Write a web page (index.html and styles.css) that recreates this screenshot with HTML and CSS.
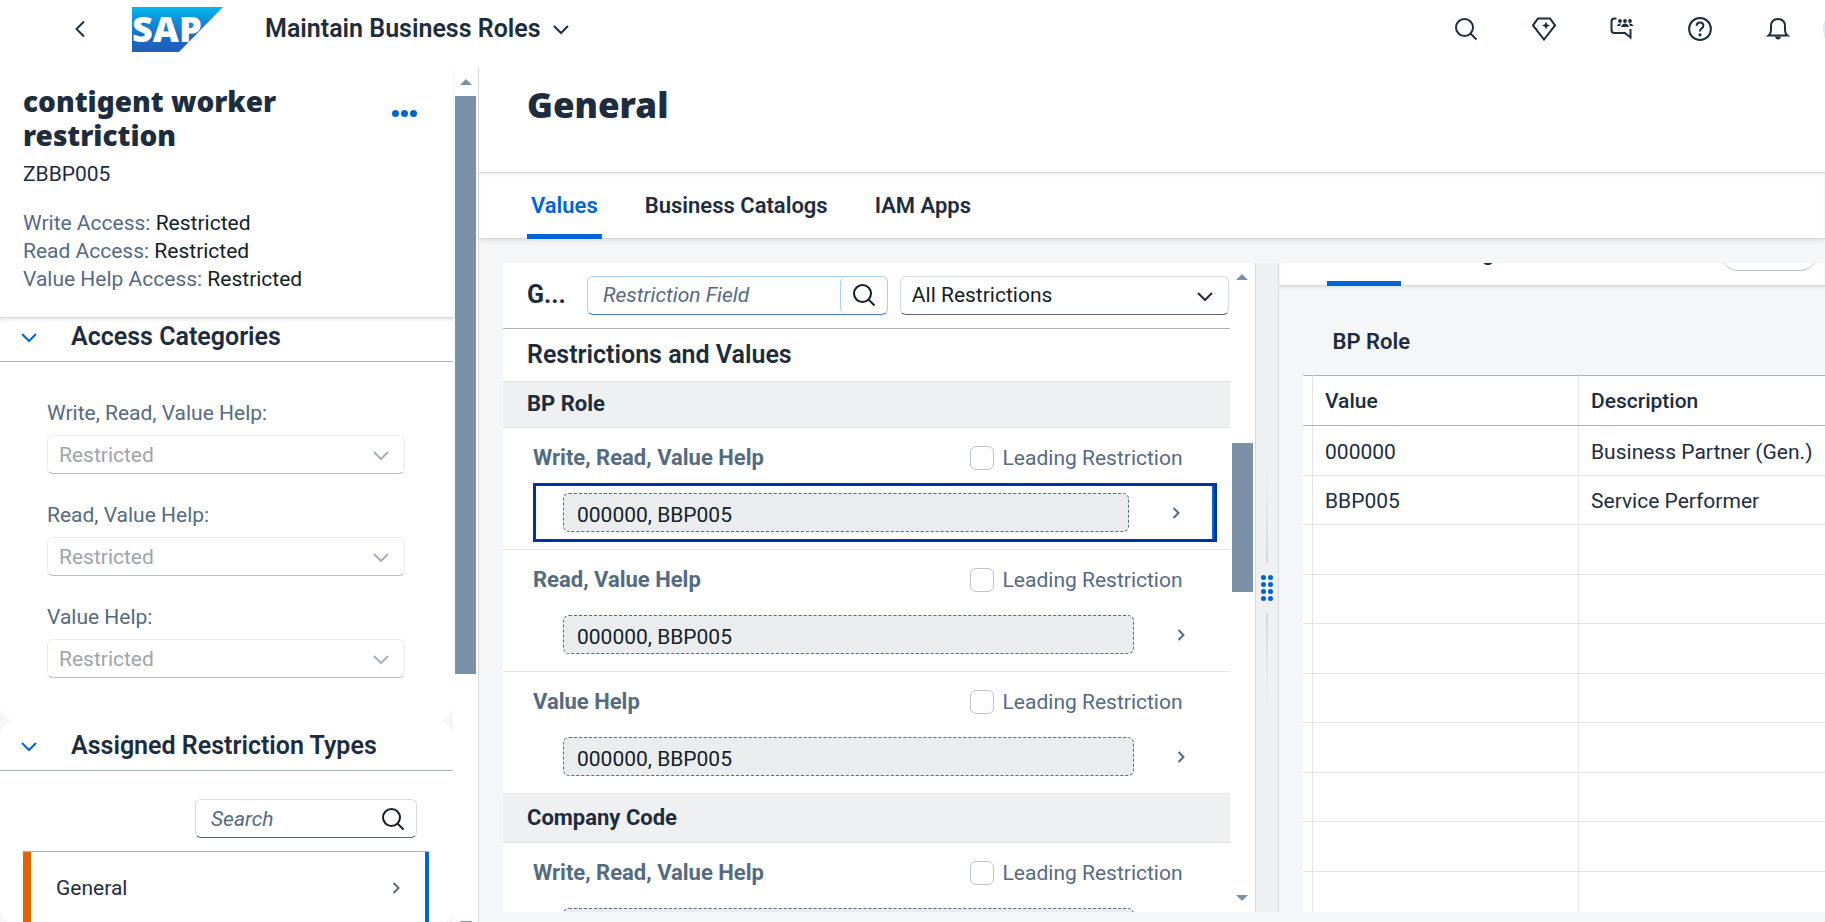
FILE: index.html
```html
<!DOCTYPE html>
<html lang="en">
<head>
    <meta charset="UTF-8">
    <meta name="viewport" content="width=device-width, initial-scale=1.0">
    <title>Maintain Business Roles</title>
    <link rel="stylesheet" href="styles.css">
</head>
<body>
    <!-- Shared icons -->
    <svg class="icon-defs" width="0" height="0" aria-hidden="true">
        <symbol id="search" viewBox="0 0 24 24"><circle cx="10.5" cy="10.5" r="8.5"/><path d="M16.6 16.6 22.5 22.5"/></symbol>
        <symbol id="down" viewBox="0 0 24 24"><path d="M5 9l7 7 7-7"/></symbol>
        <symbol id="right" viewBox="0 0 24 24"><path d="M9.500 7l5 5-5 5"/></symbol>
    </svg>

    <header class="shell">
        <button class="back" aria-label="Back">
            <svg class="icon" viewBox="0 0 24 24"><path d="M16 4.500l-7.500 7.500 7.500 7.500"/></svg>
        </button>
        <a class="logo" href="#" aria-label="SAP home">
            <svg width="91" height="45" viewBox="0 0 91 45">
                <defs>
                    <linearGradient id="sapBlue" x1="0" y1="0" x2="0" y2="1">
                        <stop offset="0" stop-color="#00b8f1"/>
                        <stop offset="0.3" stop-color="#0d90d9"/>
                        <stop offset="0.65" stop-color="#1a6cc6"/>
                        <stop offset="1" stop-color="#1e5fbb"/>
                    </linearGradient>
                </defs>
                <path d="M0 0h91L47 45H0z" fill="url(#sapBlue)"/>
                <text class="logo-text" x="0" y="35">SAP</text>
            </svg>
        </a>
        <button class="app-title">Maintain Business Roles
            <svg class="icon"><use href="#down"/></svg>
        </button>
        <div class="shell-actions">
            <button aria-label="Search"><svg class="icon"><use href="#search"/></svg></button>
            <button aria-label="What's new">
                <svg class="icon" viewBox="0 0 24 24"><path d="M6 1.500h12l5 6.800L12 22.500 1 8.300z"/><path class="solid" d="M14 4.500l1.200 2.800 2.800 1.200-2.800 1.200L14 12.500l-1.200-2.800L10 8.500l2.800-1.200z"/></svg>
            </button>
            <button aria-label="Community">
                <svg class="icon" viewBox="0 0 24 24"><path d="M6.500 1.500H4.500Q1.500 1.500 1.500 4.500v8.500q0 3 3 3H15l5.500 4.500V12"/><g class="solid"><circle cx="10" cy="4" r="1.900"/><circle cx="15" cy="4" r="1.900"/><circle cx="20" cy="4" r="1.900"/><path d="M7 9q.5-3 4-2.500l-1 2.500zM11 10q1-3.500 4-3.500t4 3.500zM19 6.500q3.500-.5 4.500 2.500h-3.500z"/></g></svg>
            </button>
            <button aria-label="Help">
                <svg class="icon" viewBox="0 0 24 24"><circle cx="12" cy="12" r="10.900"/><path d="M8.600 8.700q.2-3.200 3.400-3.200t3.400 3q0 1.800-1.700 2.900T12 14.500"/><circle class="solid" cx="12" cy="17.800" r="1.600"/></svg>
            </button>
            <button aria-label="Notifications">
                <svg class="icon" viewBox="0 0 24 24"><path d="M2.500 18.500q2.500-2 2.500-5V9.500Q5 2 12 2t7 7.500v4q0 3 2.500 5z"/><path class="solid" d="M9 19.500h6q-.5 3-3 3t-3-3z"/></svg>
            </button>
            <span class="avatar"></span>
        </div>
    </header>

    <div class="page">
        <aside class="sidebar">
            <div class="sidebar-content">
                <div class="role-header">
                    <div class="role-title">
                        <h2>contigent worker restriction</h2>
                        <button class="more" aria-label="More"><i></i><i></i><i></i></button>
                    </div>
                    <p class="role-id">ZBBP005</p>
                    <p><span>Write Access:</span> Restricted</p>
                    <p><span>Read Access:</span> Restricted</p>
                    <p><span>Value Help Access:</span> Restricted</p>
                </div>

                <section class="panel panel-first">
                    <h3><button class="toggle" aria-label="Collapse"><svg class="icon"><use href="#down"/></svg></button>Access Categories</h3>
                    <div class="categories">
                        <div class="field">
                            <label for="writeAccess">Write, Read, Value Help:</label>
                            <div class="select"><select id="writeAccess" disabled><option>Restricted</option></select><svg class="icon"><use href="#down"/></svg></div>
                        </div>
                        <div class="field">
                            <label for="readAccess">Read, Value Help:</label>
                            <div class="select"><select id="readAccess" disabled><option>Restricted</option></select><svg class="icon"><use href="#down"/></svg></div>
                        </div>
                        <div class="field">
                            <label for="helpAccess">Value Help:</label>
                            <div class="select"><select id="helpAccess" disabled><option>Restricted</option></select><svg class="icon"><use href="#down"/></svg></div>
                        </div>
                    </div>
                </section>

                <section class="panel">
                    <h3><button class="toggle" aria-label="Collapse"><svg class="icon"><use href="#down"/></svg></button>Assigned Restriction Types</h3>
                    <div class="search type-search">
                        <input type="text" placeholder="Search" aria-label="Search restriction types">
                        <button aria-label="Search"><svg class="icon"><use href="#search"/></svg></button>
                    </div>
                    <div class="type-list">
                        <button class="type-item">General <svg class="icon"><use href="#right"/></svg></button>
                    </div>
                </section>
            </div>
            <div class="scrollbar sidebar-scroll">
                <span class="arrow up"></span>
                <span class="before"></span><span class="thumb"></span><span class="after"></span>
                <span class="arrow down"></span>
            </div>
        </aside>

        <main class="main">
            <div class="main-header"><h1>General</h1></div>
            <nav class="tabs">
                <a class="active" href="#values">Values</a>
                <a href="#catalogs">Business Catalogs</a>
                <a href="#apps">IAM Apps</a>
            </nav>

            <div class="split">
                <section class="restrictions">
                    <div class="restriction-list">
                        <div class="toolbar">
                            <h2>G...</h2>
                            <div class="search field-search">
                                <input type="text" placeholder="Restriction Field" aria-label="Restriction Field">
                                <button aria-label="Search"><svg class="icon"><use href="#search"/></svg></button>
                            </div>
                            <div class="select filter"><select aria-label="Filter"><option>All Restrictions</option></select><svg class="icon"><use href="#down"/></svg></div>
                        </div>
                        <h3 class="list-title">Restrictions and Values</h3>
                        <h4 class="group group-first">BP Role</h4>
                        <div class="restriction">
                            <div class="restriction-head">
                                <strong>Write, Read, Value Help</strong>
                                <label><input type="checkbox">Leading Restriction</label>
                            </div>
                            <button class="restriction-item selected"><span class="value">000000, BBP005</span><svg class="icon"><use href="#right"/></svg></button>
                        </div>
                        <div class="restriction">
                            <div class="restriction-head">
                                <strong>Read, Value Help</strong>
                                <label><input type="checkbox">Leading Restriction</label>
                            </div>
                            <button class="restriction-item"><span class="value">000000, BBP005</span><svg class="icon"><use href="#right"/></svg></button>
                        </div>
                        <div class="restriction">
                            <div class="restriction-head">
                                <strong>Value Help</strong>
                                <label><input type="checkbox">Leading Restriction</label>
                            </div>
                            <button class="restriction-item"><span class="value">000000, BBP005</span><svg class="icon"><use href="#right"/></svg></button>
                        </div>
                        <h4 class="group">Company Code</h4>
                        <div class="restriction">
                            <div class="restriction-head">
                                <strong>Write, Read, Value Help</strong>
                                <label><input type="checkbox">Leading Restriction</label>
                            </div>
                            <button class="restriction-item"><span class="value"></span><svg class="icon"><use href="#right"/></svg></button>
                        </div>
                    </div>
                    <div class="scrollbar list-scroll">
                        <span class="arrow up"></span>
                        <span class="before"></span><span class="thumb"></span><span class="after"></span>
                        <span class="arrow down"></span>
                    </div>
                </section>

                <div class="splitter">
                    <span class="line top"></span>
                    <span class="grip"><i></i><i></i><i></i><i></i><i></i><i></i><i></i><i></i></span>
                    <span class="line bottom"></span>
                </div>

                <section class="details">
                    <div class="details-bar">
                        <nav class="tabs">
                            <a class="active" href="#detail-values">Values</a>
                            <a href="#usage">Usage</a>
                            <button class="pill" aria-label="Options"></button>
                        </nav>
                    </div>
                    <h3>BP Role</h3>
                    <table>
                        <thead>
                            <tr><th class="mark"></th><th class="value-col">Value</th><th>Description</th></tr>
                        </thead>
                        <tbody>
                            <tr><td></td><td>000000</td><td>Business Partner (Gen.)</td></tr>
                            <tr><td></td><td>BBP005</td><td>Service Performer</td></tr>
                            <tr><td></td><td></td><td></td></tr>
                            <tr><td></td><td></td><td></td></tr>
                            <tr><td></td><td></td><td></td></tr>
                            <tr><td></td><td></td><td></td></tr>
                            <tr><td></td><td></td><td></td></tr>
                            <tr><td></td><td></td><td></td></tr>
                            <tr><td></td><td></td><td></td></tr>
                            <tr><td></td><td></td><td></td></tr>
                        </tbody>
                    </table>
                </section>
            </div>
        </main>
    </div>
</body>
</html>
```
FILE: styles.css
```css
* {
    box-sizing: border-box;
}
body {
    margin: 0;
    height: 100vh;
    overflow: hidden;
    display: flex;
    flex-direction: column;
    background: #fff;
    color: #1d2d3e;
    font-family: Roboto, "Noto Sans", sans-serif;
    font-size: 21px;
    line-height: 28px;
}
h1, h2, h3, h4, p {
    margin: 0;
}
button, input, select {
    font: inherit;
    color: inherit;
}
button {
    padding: 0;
    border: none;
    background: none;
    cursor: pointer;
}
.icon-defs {
    position: absolute;
}
.icon {
    width: 24px;
    height: 24px;
    flex: none;
    fill: none;
    stroke: currentColor;
    stroke-width: 2;
}
.icon .solid {
    fill: currentColor;
    stroke: none;
}

/* Shell header */
.shell {
    flex: none;
    display: flex;
    align-items: center;
    height: 68px;
    padding: 0 0 10px 68px;
    overflow: hidden;
}
.back {
    display: flex;
}
.logo {
    display: flex;
    margin: 0 42px 0 40px;
}
.logo svg {
    overflow: visible;
}
.logo-text {
    font-family: "Open Sans", sans-serif;
    font-size: 36px;
    font-weight: 800;
    fill: #fff;
}
.app-title {
    display: flex;
    align-items: center;
    gap: 8px;
    font-size: 25px;
    font-weight: 600;
}
.shell-actions {
    display: flex;
    gap: 12px;
    margin-left: auto;
    margin-right: -46px;
}
.shell-actions button {
    display: flex;
    align-items: center;
    justify-content: center;
    width: 66px;
    height: 48px;
}
.avatar {
    width: 48px;
    height: 48px;
    border-radius: 50%;
    background: #d1efff;
}

.page {
    flex: 1;
    min-height: 0;
    display: flex;
}

/* Sidebar */
.sidebar {
    flex: none;
    display: flex;
    width: 479px;
    overflow: hidden;
    border-right: 1px solid #d9d9d9;
}
.sidebar-content {
    flex: 1;
    background: #f5f6f7;
}
.role-header {
    position: relative;
    padding: 16px 24px 24px 23px;
    background: #fff;
    border-bottom: 1px solid #d9d9d9;
    box-shadow: 0 2px 4px rgba(34, 53, 72, 0.1);
}
.role-title {
    display: flex;
    justify-content: space-between;
}
.role-title h2 {
    width: 300px;
    font-family: "Noto Sans", sans-serif;
    font-size: 28px;
    line-height: 34px;
    font-weight: 900;
}
.role-header .role-id {
    margin: 8px 0 21px;
    color: #1d2d3e;
}
.role-header p {
    color: #131e29;
}
.role-header p span {
    color: #556b82;
}
.more {
    display: flex;
    align-items: center;
    gap: 2px;
    height: 58px;
    padding: 0 12px;
}
.more i, .grip i {
    border-radius: 50%;
    background: #0064d9;
}
.more i {
    width: 7px;
    height: 7px;
}
.panel {
    background: #fff;
    border-radius: 16px;
}
.panel-first {
    margin-top: -6px;
}
.panel h3 {
    display: flex;
    align-items: center;
    height: 50px;
    padding-left: 17px;
    border-bottom: 1px solid #a8b3bd;
    font-size: 25px;
    font-weight: 600;
}
.toggle {
    display: flex;
    margin-right: 30px;
    color: #0064d9;
}
.categories {
    display: flex;
    flex-direction: column;
    gap: 27px;
    padding: 37px 48px 43px 47px;
}
.field {
    display: flex;
    flex-direction: column;
    gap: 8px;
    color: #556b82;
}
.select {
    position: relative;
}
.select select {
    display: block;
    width: 100%;
    height: 39px;
    padding: 0 48px 0 11px;
    appearance: none;
    background: #fff;
    border: 1px solid #d5dadf;
    border-bottom-color: #556b81;
    border-radius: 6px;
    color: #131e29;
    opacity: 1;
}
.select select:disabled {
    border-color: #ebecee;
    border-bottom-color: #b3bdc7;
    color: #a1a5a9;
}
.select .icon {
    position: absolute;
    right: 12px;
    top: 8px;
    pointer-events: none;
}
.field .icon {
    color: #a6b0ba;
}
.search {
    display: flex;
    height: 39px;
    background: #fff;
    border: 1px solid #d5dadf;
    border-bottom-color: #556b81;
    border-radius: 6px;
}
.search input {
    flex: 1;
    min-width: 0;
    padding: 0 15px;
    border: none;
    background: none;
}
.search input::placeholder {
    color: #556b82;
    font-style: italic;
    opacity: 1;
}
.search button {
    display: flex;
    align-items: center;
    justify-content: center;
    width: 46px;
    color: #131e29;
}
.type-search {
    width: 222px;
    margin: 28px 36px 13px auto;
}
.type-list {
    margin: 0 24px 0 23px;
    border-top: 1px solid #a8b3bd;
}
.type-item {
    display: flex;
    align-items: center;
    justify-content: space-between;
    width: 100%;
    height: 72px;
    padding: 0 17px 0 25px;
    border-left: 8px solid #df6500;
    border-right: 4px solid #0064d9;
}
.type-item .icon, .restriction-item .icon {
    color: #556b82;
}

/* Scrollbars */
.scrollbar {
    flex: none;
    display: flex;
    flex-direction: column;
    align-items: center;
    width: 25px;
    background: #fff;
}
.arrow {
    display: flex;
    align-items: center;
    justify-content: center;
    height: 28px;
}
.arrow::before {
    content: "";
    border: 6px solid transparent;
}
.arrow.up::before {
    border-top: none;
    border-bottom-color: #7b91a8;
}
.arrow.down::before {
    border-bottom: none;
    border-top-color: #7b91a8;
}
.thumb {
    width: 21px;
    background: #7b91a8;
}
.sidebar-scroll {
    height: calc(100% + 16px);
}
.sidebar-scroll .thumb {
    flex: 71;
}
.sidebar-scroll .after {
    flex: 29;
}
.list-scroll .before {
    flex: 257;
}
.list-scroll .thumb {
    flex: 250;
}
.list-scroll .after {
    flex: 493;
}

/* Main area */
.main {
    flex: 1;
    min-width: 0;
    display: flex;
    flex-direction: column;
    background: #f5f6f7;
}
.main-header {
    height: 105px;
    padding: 0 48px;
    background: #fff;
    border-bottom: 1px solid #d9d9d9;
}
.main-header h1 {
    font-family: "Noto Sans", sans-serif;
    font-size: 35px;
    line-height: 74px;
    font-weight: 900;
}
.tabs {
    display: flex;
    gap: 39px;
    height: 66px;
    padding: 0 48px;
    background: #fff;
    border-bottom: 1px solid #d9d9d9;
    box-shadow: inset 0 2px 3px rgba(34, 53, 72, 0.08), 0 2px 4px rgba(34, 53, 72, 0.1);
}
.tabs a {
    height: 66px;
    padding: 0 4px;
    border-bottom: 5px solid transparent;
    border-radius: 4px 4px 0 0;
    color: #1d2d3e;
    font-size: 22px;
    font-weight: 600;
    line-height: 66px;
    text-decoration: none;
}
.tabs .active {
    color: #0064d9;
    background: linear-gradient(#0064d9, #0064d9) bottom / 100% 5px no-repeat border-box;
}
.split {
    flex: 1;
    min-height: 0;
    display: grid;
    grid-template-columns: 579fr 24px 421fr;
    margin: 24px 0 10px 24px;
}
.restrictions {
    display: flex;
    min-width: 0;
    min-height: 0;
    background: #fff;
}
.restriction-list {
    flex: 1;
    min-width: 0;
    overflow: hidden;
}
.toolbar {
    display: flex;
    align-items: center;
    gap: 12px;
    height: 66px;
    padding: 0 1px 1px 24px;
    border-bottom: 1px solid #a8b3bd;
}
.toolbar h2 {
    width: 48px;
    font-size: 25px;
    font-weight: 700;
}
.field-search {
    flex: 300;
    min-width: 0;
    border-color: #a6cfff;
    border-bottom-color: #3f7dc4;
}
.field-search button {
    border-left: 1px solid #a6cfff;
    border-radius: 6px;
    width: 47px;
}
.filter {
    flex: 330;
}
.list-title {
    height: 53px;
    padding-left: 24px;
    border-bottom: 1px solid #e0e2e4;
    font-size: 25px;
    line-height: 52px;
    font-weight: 600;
}
.group {
    height: 49px;
    padding-left: 24px;
    background: #eff0f2;
    border-bottom: 1px solid #e0e2e4;
    font-size: 22px;
    line-height: 48px;
    font-weight: 700;
}
.group-first {
    height: 46px;
    line-height: 44px;
}
.restriction {
    padding: 16px 13px 7px 30px;
    border-bottom: 1px solid #e5e5e5;
}
.restriction-head {
    display: flex;
    justify-content: space-between;
    margin-bottom: 11px;
    padding-right: 34px;
    color: #556b82;
}
.restriction-head strong {
    font-size: 22px;
}
.restriction-head label {
    display: flex;
    align-items: center;
    gap: 9px;
}
.restriction-head input {
    appearance: none;
    width: 24px;
    height: 24px;
    margin: 0;
    background: #fff;
    border: 1px solid #bcc3ca;
    border-radius: 6px;
}
.restriction-item {
    display: flex;
    align-items: center;
    gap: 35px;
    width: 100%;
    height: 59px;
    padding: 0 21px 0 27px;
    border: 3px solid transparent;
    text-align: left;
}
.restriction-item.selected {
    padding-right: 26px;
    border-color: #0032a5;
    box-shadow: inset -2px 0 #0064d9;
}
.value {
    flex: 1;
    height: 39px;
    padding: 0 13px;
    background: #eaecee;
    border: 1px dashed #556b82;
    border-radius: 6px;
    color: #131e29;
    line-height: 42px;
}

/* Splitter between list and details */
.splitter {
    display: flex;
    flex-direction: column;
    align-items: center;
    justify-content: center;
    gap: 12px;
    background: #eff0f2;
    border: 1px solid #d9d9d9;
    border-width: 0 1px;
}
.line {
    width: 2px;
    height: 94px;
}
.line.top {
    background: linear-gradient(transparent, #d9d9d9);
}
.line.bottom {
    background: linear-gradient(#d9d9d9, transparent);
}
.grip {
    display: grid;
    grid-template-columns: 5px 5px;
    gap: 2px;
}
.grip i {
    width: 5px;
    height: 5px;
}

/* Details */
.details {
    min-width: 0;
    overflow: hidden;
}
.details-bar {
    display: flex;
    align-items: flex-end;
    height: 23px;
}
.details-bar .tabs {
    flex: 1;
    padding-right: 7px;
}
.pill {
    align-self: flex-end;
    width: 98px;
    height: 39px;
    margin: 0 0 14px auto;
    border: 1px solid #bcc3ca;
    border-radius: 18px;
}
.details h3 {
    padding: 42px 54px 19px;
    font-size: 22px;
    font-weight: 600;
}
.details table {
    width: calc(100% - 24px);
    margin-left: 24px;
    border-collapse: collapse;
    table-layout: fixed;
    background: #fff;
    border-top: 1px solid #a8b3bd;
}
.details th, .details td {
    height: 50px;
    padding: 0 12px;
    border-right: 1px solid #e5e5e5;
    border-bottom: 1px solid #e5e5e5;
    text-align: left;
    font-weight: 400;
    white-space: nowrap;
}
.details td {
    padding-top: 2px;
}
.details th:last-child, .details td:last-child {
    border-right: none;
}
.details th {
    border-bottom-color: #a8b3bd;
    font-weight: 500;
}
.details tr:nth-child(even) td {
    height: 49px;
}
.details .mark {
    width: 10px;
    padding: 0;
}
.details .value-col {
    width: 266px;
}
```
